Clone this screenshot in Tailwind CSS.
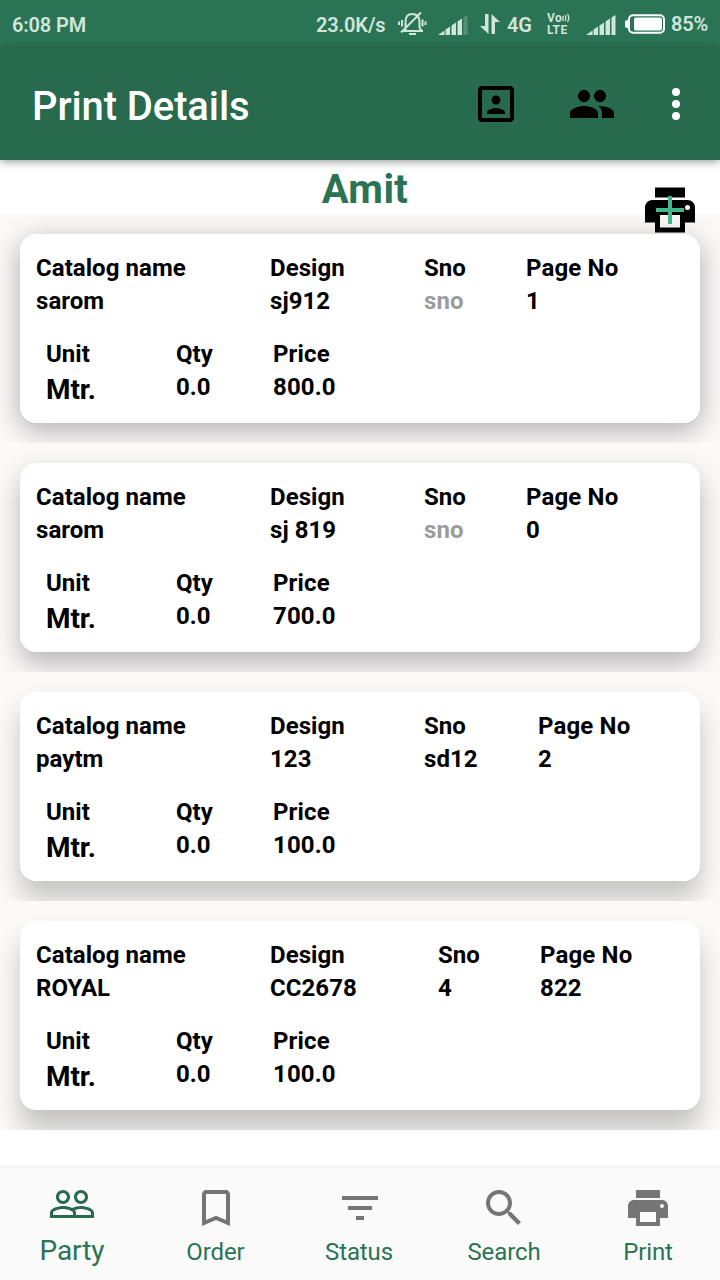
<!DOCTYPE html>
<html lang="en">
<head>
<meta charset="utf-8">
<title>Print Details</title>
<script src="https://cdn.jsdelivr.net/npm/@tailwindcss/browser@4"></script>
</head>
<body class="w-[720px] h-[1280px] overflow-hidden bg-white font-['Roboto',sans-serif] flex flex-col">
<div class="h-12 shrink-0 bg-[#2a7354] text-[#d0e6da] text-xl font-semibold tracking-[-0.15px] flex items-center justify-between px-3">
  <span class="pt-px">6:08 PM</span>
  <div class="flex items-center">
    <span class="w-[81px] pt-px whitespace-nowrap">23.0K/s</span>
    <svg class="w-[30px] h-[30px]" viewBox="0 0 30 30" fill="none" stroke="currentColor" stroke-width="2"><path d="M6 22H26M8.500 21.500V13C8.500 8 11 5 15 5C20 5 22.500 8 22.500 13V19L25 22M12 25H19M4 23.500L24 3.500M5 11V17.500M2 12.500V16M25.500 10.500V17.500M28.500 12.500V16"/></svg>
    <svg class="ml-[11px] mt-px w-[30px] h-5" viewBox="0 0 30 20" fill="currentColor"><path d="M0 20L6.500 15.500V20zM7.500 14.500L12 11.500V20H7.500zM13.500 10.500L18 7.500V20H13.500zM19.500 6.500L24 3.500V20H19.500z"/><path opacity=".25" d="M25.500 2.500L29.500 0V20H25.500z"/></svg>
    <svg class="ml-3 w-5 h-5" viewBox="0 0 20 20" fill="currentColor"><path d="M5 0H8.500V20L0 12H5zM11.500 0L20 8H15V20H11.500z"/></svg>
    <span class="ml-[7px] w-10 pt-px">4G</span>
    <div class="w-[24px] flex flex-col text-[12px] leading-[12px] font-bold tracking-[0.4px]"><span class="flex items-center h-[12px] whitespace-nowrap">Vo<svg class="w-2 h-3" viewBox="0 0 8 12" fill="none" stroke="currentColor" stroke-width="1.300"><path d="M1 4V9M3 3Q4.500 6 3 9M5.500 2Q8 6 5.500 10"/></svg></span><span class="h-[12px]">LTE</span></div>
    <svg class="ml-[15px] mt-px w-[30px] h-5" viewBox="0 0 30 20" fill="currentColor"><path d="M0 20L6.500 15.500V20zM7.500 14.500L12 11.500V20H7.500zM13.500 10.500L18 7.500V20H13.500zM19.500 6.500L24 3.500V20H19.500zM25.500 2.500L29.500 0V20H25.500z"/></svg>
    <svg class="ml-[9px] w-[42px] h-5" viewBox="0 0 42 20"><rect x="4" y="1.200" width="35" height="17.500" rx="4" fill="none" stroke="#fff" stroke-width="2"/><path d="M0 8Q0 6 3 6V14Q0 14 0 12zM10 3.500H35Q37 3.500 37 5.500V14.500Q37 16.500 35 16.500H10Q9 16 9 14V6Q9 4 10 3.500z" fill="#fff"/></svg>
    <span class="ml-[4px] w-[37px] whitespace-nowrap">85%</span>
  </div>
</div>
<header class="relative z-10 h-28 shrink-0 bg-[#286a4d] flex items-center pl-8 pr-5 shadow-[0_2px_8px_rgba(0,0,0,0.38)]">
  <h1 class="text-[40px] leading-[48px] font-medium tracking-[-0.1px] text-white pt-[5px] flex-1 whitespace-nowrap">Print Details</h1>
  <svg class="w-12 h-12" viewBox="0 0 24 24"><path d="M12 12.250c1.240 0 2.250-1.010 2.250-2.250S13.240 7.750 12 7.750 9.750 8.760 9.750 10s1.010 2.250 2.250 2.250zm4.500 4c0-1.500-3-2.250-4.500-2.250s-4.500.75-4.500 2.250V17h9v-.75zM19 3H5c-1.100 0-2 .9-2 2v14c0 1.100.9 2 2 2h14c1.100 0 2-.9 2-2V5c0-1.100-.9-2-2-2zm0 16H5V5h14v14z"/></svg>
  <svg class="ml-12 w-12 h-12" viewBox="0 0 24 24"><path d="M16 11c1.660 0 2.990-1.340 2.990-3S17.660 5 16 5s-3 1.340-3 3 1.340 3 3 3zm-8 0c1.660 0 2.990-1.340 2.990-3S9.660 5 8 5 5 6.340 5 8s1.340 3 3 3zm0 2c-2.330 0-7 1.170-7 3.500V19h14v-2.500c0-2.330-4.670-3.500-7-3.500zm8 0c-.29 0-.62.02-.97.05 1.160.84 1.970 1.970 1.970 3.450V19h6v-2.500c0-2.330-4.670-3.500-7-3.500z"/></svg>
  <svg class="ml-9 w-12 h-12" viewBox="0 0 24 24" fill="#fff"><circle cx="12" cy="6" r="2"/><circle cx="12" cy="12" r="2"/><circle cx="12" cy="18" r="2"/></svg>
</header>
<main class="relative flex-1">
  <h2 class="h-[54px] pl-[10px] pt-[6px] text-center text-[40px] leading-[48px] font-bold tracking-[0.4px] text-[#2a7354]">Amit</h2>
  <div id="orders"></div>
  <button class="absolute left-[640px] top-[20px] w-[60px] h-[60px]" aria-label="Add print">
    <svg class="w-[60px] h-[60px]" viewBox="0 0 60 60"><path d="M15 7.500H45V17.500H15zM47.500 20H12.500C8.350 20 5 23.350 5 27.500V42.500H15V52.500H45V42.500H55V27.500C55 23.350 51.650 20 47.500 20zM40 47.500H20V35H40z"/><circle cx="47.500" cy="27.500" r="2.500" fill="#fff"/><path d="M28 16H32V28H44V32H32V44H28V32H16V28H28z" fill="#45b68b"/></svg>
  </button>
</main>
<nav class="h-[114px] shrink-0 border-t-2 border-[#f4f4f4] bg-[#fafafa] grid grid-cols-5 text-[#2a7354] text-2xl tracking-[-0.1px]">
  <a class="flex flex-col items-center pt-3"><svg class="w-12 h-12 text-[#286a4d]" viewBox="0 0 24 24" fill="currentColor"><path d="M16.500 13c-1.200 0-3.070.34-4.500 1-1.430-.67-3.300-1-4.500-1C5.330 13 1 14.080 1 16.250V19h22v-2.750c0-2.170-4.330-3.250-6.500-3.250zm-4 4.500h-10v-1.250c0-.54 2.560-1.750 5-1.750s5 1.210 5 1.750v1.250zm9 0H14v-1.250c0-.46-.2-.86-.52-1.220.88-.3 1.960-.53 3.020-.53 2.440 0 5 1.210 5 1.750v1.250zM7.500 12c1.930 0 3.500-1.570 3.500-3.500S9.430 5 7.500 5 4 6.570 4 8.500 5.570 12 7.500 12zm0-5.500c1.100 0 2 .9 2 2s-.9 2-2 2-2-.9-2-2 .9-2 2-2zm9 5.500c1.930 0 3.500-1.570 3.500-3.500S18.430 5 16.500 5 13 6.570 13 8.500s1.570 3.500 3.500 3.500zm0-5.500c1.100 0 2 .9 2 2s-.9 2-2 2-2-.9-2-2 .9-2 2-2z"/></svg><span class="mt-[7px] text-[28px] leading-8">Party</span></a>
  <a class="flex flex-col items-center pt-4"><svg class="w-12 h-12" viewBox="0 0 24 24" fill="#757575"><path d="M17 3H7c-1.100 0-1.990.9-1.990 2L5 21l7-3 7 3V5c0-1.100-.9-2-2-2zm0 15l-5-2.180L7 18V5h10v13z"/></svg><span class="mt-1 pr-px leading-8">Order</span></a>
  <a class="flex flex-col items-center pt-4"><svg class="w-12 h-12" viewBox="0 0 24 24" fill="#757575"><path d="M10 18h4v-2h-4v2zM3 6v2h18V6H3zm3 7h12v-2H6v2z"/></svg><span class="mt-1 pr-0.5 leading-8">Status</span></a>
  <a class="flex flex-col items-center pt-4"><svg class="w-12 h-12" viewBox="0 0 24 24" fill="#757575"><path d="M15.500 14h-.79l-.28-.27C15.410 12.590 16 11.110 16 9.500 16 5.910 13.090 3 9.500 3S3 5.910 3 9.500 5.910 16 9.500 16c1.610 0 3.090-.59 4.230-1.570l.27.28v.79l5 4.990L20.490 19l-4.990-5zm-6 0C7.010 14 5 11.990 5 9.500S7.010 5 9.500 5 14 7.010 14 9.500 11.990 14 9.500 14z"/></svg><span class="mt-1 leading-8">Search</span></a>
  <a class="flex flex-col items-center pt-4"><svg class="w-12 h-12" viewBox="0 0 24 24" fill="#757575"><path d="M19 8H5c-1.660 0-3 1.340-3 3v6h4v4h12v-4h4v-6c0-1.660-1.340-3-3-3zm-3 11H8v-5h8v5zm3-7c-.55 0-1-.45-1-1s.45-1 1-1 1 .45 1 1-.45 1-1 1zm-1-9H6v4h12V3z"/></svg><span class="mt-1 leading-8">Print</span></a>
</nav>
<script>
const orders = [
  {name:'sarom', design:'sj912', sno:'', page:'1', price:'800.0', cols:'234px 154px 102px 1fr', shadow:'shadow-[0_7px_28px_rgba(20,15,20,0.34)]'},
  {name:'sarom', design:'sj 819', sno:'', page:'0', price:'700.0', cols:'234px 154px 102px 1fr', shadow:'shadow-[0_12px_26px_rgba(20,15,20,0.29)]'},
  {name:'paytm', design:'123', sno:'sd12', page:'2', price:'100.0', cols:'234px 154px 114px 1fr', shadow:'shadow-[0_17px_26px_rgba(20,20,20,0.24)]'},
  {name:'ROYAL', design:'CC2678', sno:'4', page:'822', price:'100.0', cols:'234px 168px 102px 1fr', shadow:'shadow-[0_20px_26px_rgba(20,20,20,0.24)]'}
];
document.getElementById('orders').innerHTML = orders.map(o => `
<section class="h-[229px] p-5 overflow-hidden bg-[#fbfaf9]">
  <div class="h-[189px] rounded-2xl bg-white px-4 pt-[18px] text-2xl leading-[33px] font-bold tracking-[0.05px] text-black ${o.shadow}">
    <div class="grid whitespace-nowrap" style="grid-template-columns:${o.cols}">
      <div>Catalog name<br>${o.name}</div>
      <div>Design<br>${o.design}</div>
      <div>Sno<br>${o.sno || '<span class="text-[#9c9c9c]">sno</span>'}</div>
      <div class="tracking-[0.15px]">Page No<br>${o.page}</div>
    </div>
    <div class="grid grid-cols-[130px_97px_1fr] pl-2.5 pt-5 whitespace-nowrap">
      <div>Unit<div class="pt-[2px] text-[28px] tracking-[-0.1px]">Mtr.</div></div>
      <div>Qty<br>0.0</div>
      <div class="tracking-[0.15px]">Price<br>${o.price}</div>
    </div>
  </div>
</section>`).join('');
</script>
</body>
</html>
